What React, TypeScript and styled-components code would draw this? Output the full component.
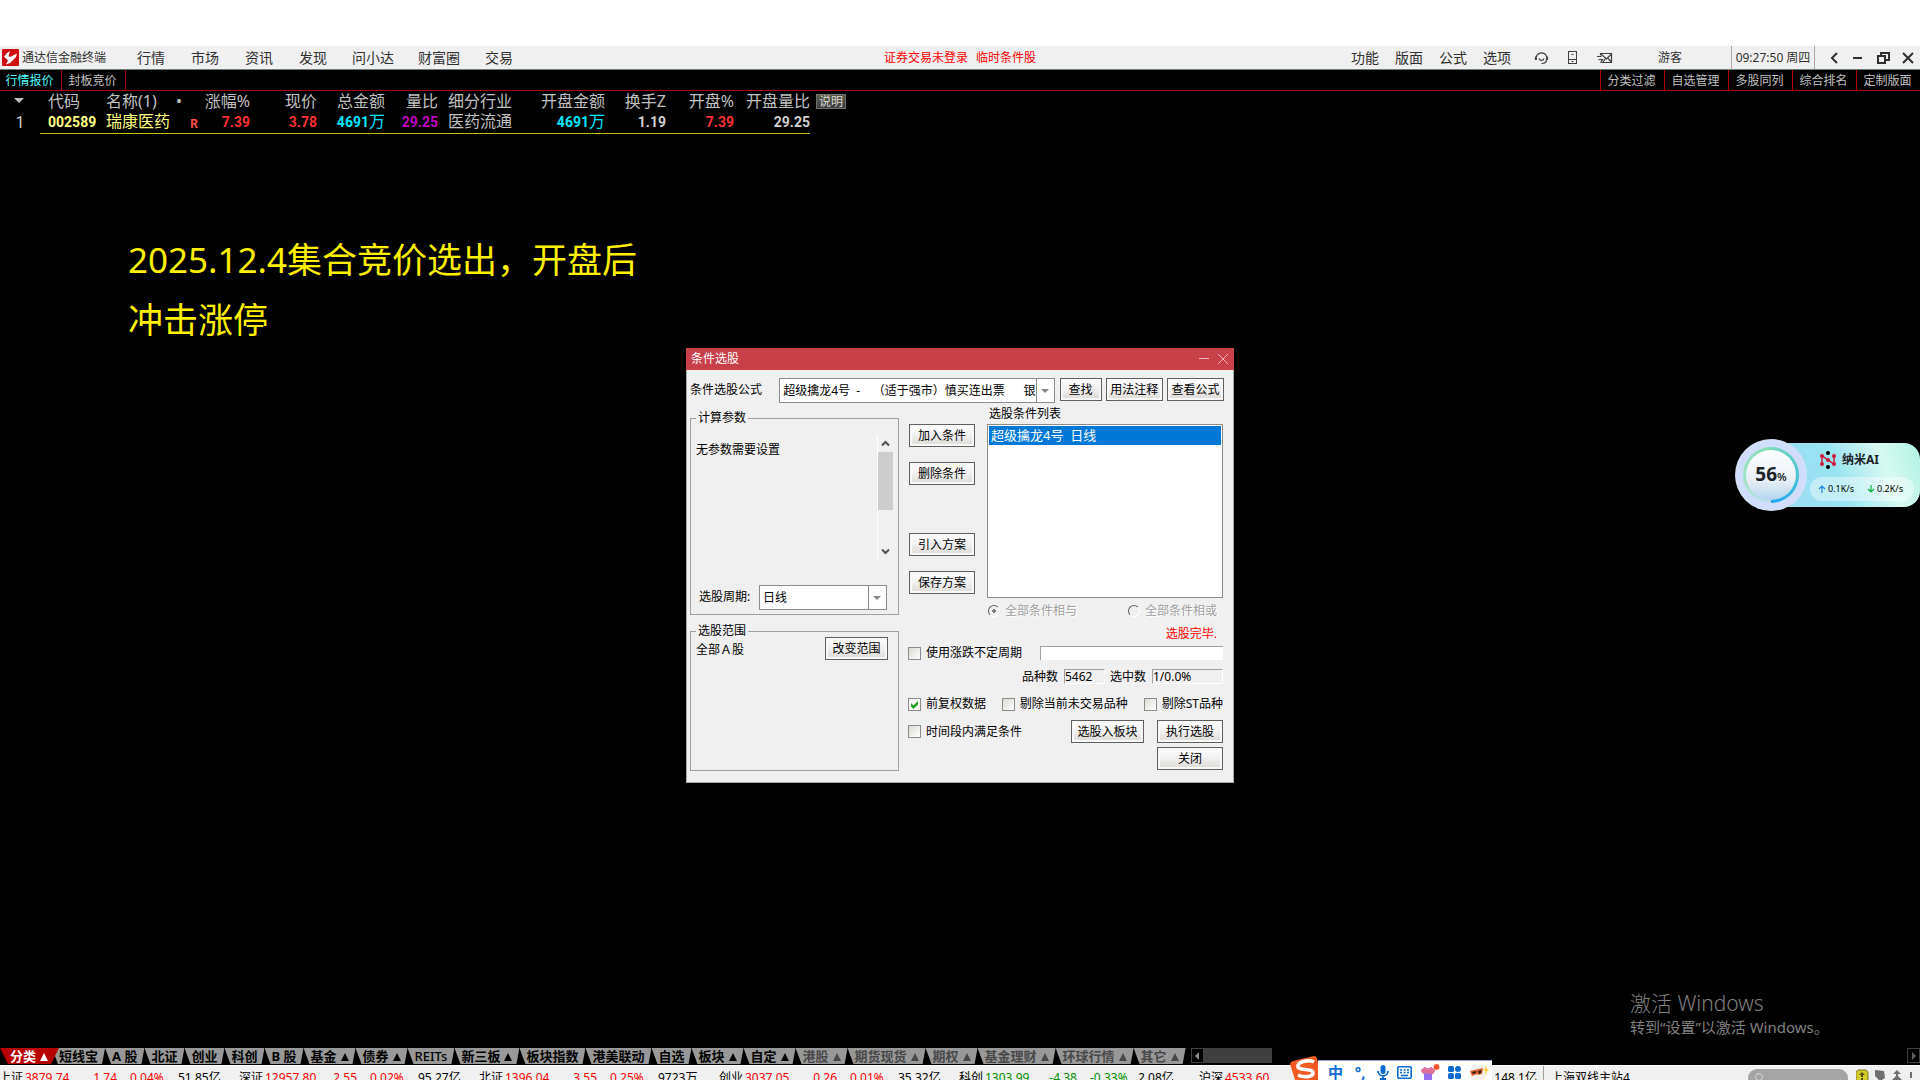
import React from "react";
import styled, { createGlobalStyle, css } from "styled-components";

const GlobalStyle = createGlobalStyle`
  *, *::before, *::after { box-sizing: border-box; }
  body {
    margin: 0;
    background: #000;
    font-family: "Noto Sans", "Noto Sans CJK SC", sans-serif;
    font-size: 12px;
    line-height: 16px;
  }
  button, input, select { font: inherit; color: inherit; margin: 0; }
`;

/* ---------- shell ---------- */

const Screen = styled.div`
  position: relative;
  display: flex;
  flex-direction: column;
  height: 100vh;
  overflow: hidden;
  background: #000;
`;

const TopStrip = styled.div`
  flex: none;
  height: 46px;
  background: #fff;
`;

const MenuBar = styled.header`
  flex: none;
  display: grid;
  grid-template-columns: 1fr auto 1fr;
  align-items: center;
  height: 24px;
  background: #f0f0f0;
  border-bottom: 1px solid #6c7c78;
  color: #303030;
`;

const Brand = styled.div`
  display: flex;
  align-items: center;
  gap: 3px;
  padding-left: 2px;
  width: 124px;
  white-space: nowrap;
`;

const MenuSide = styled.div<{ $end?: boolean }>`
  display: flex;
  align-items: center;
  justify-content: ${(p) => (p.$end ? "flex-end" : "flex-start")};
  height: 100%;
`;

const MenuButton = styled.button<{ $pad: number }>`
  border: 0;
  padding: 0 ${(p) => p.$pad}px;
  background: none;
  font-size: 14px;
  line-height: 20px;
  white-space: nowrap;
`;

const Notice = styled.div`
  display: flex;
  gap: 8px;
  color: #f00;
`;

const ToolIcons = styled.div`
  display: flex;
  align-items: center;
  gap: 19px;
  padding: 0 45px 0 15px;
`;

const IconButton = styled.button`
  display: flex;
  border: 0;
  padding: 0;
  background: none;
`;

const Guest = styled.span`
  padding-right: 49px;
`;

const Clock = styled.time`
  display: flex;
  align-items: center;
  justify-content: center;
  width: 84px;
  height: 100%;
  border: solid #a8a8a8;
  border-width: 0 1px;
  white-space: nowrap;
`;

const WindowIcons = styled.div`
  display: flex;
  gap: 12px;
  padding: 0 6px 0 14px;
`;

/* ---------- sub tabs ---------- */

const SubBar = styled.nav`
  flex: none;
  display: flex;
  justify-content: space-between;
  height: 21px;
  border-bottom: 1px solid #b00000;
`;

const SubGroup = styled.div`
  display: flex;
`;

const SubTab = styled.button<{ $active?: boolean; $edge: "left" | "right" }>`
  width: 64px;
  height: 20px;
  padding: 1px 2px 0 0;
  border: 0;
  border-${(p) => p.$edge}: 1px solid #b00000;
  background: none;
  color: ${(p) => (p.$active ? "#54fcfc" : "#c0c0c0")};
  white-space: nowrap;
  &:first-child { width: ${(p) => (p.$edge === "right" ? "62px" : "64px")}; }
`;

/* ---------- quotes ---------- */

const Main = styled.main`
  flex: 1;
  min-height: 0;
`;

const Quotes = styled.table`
  table-layout: fixed;
  width: 848px;
  border-collapse: collapse;
  color: #c0c0c0;
  font-size: 16px;
  line-height: 18px;
  svg { display: block; }
`;

const Th = styled.th<{ $left?: boolean }>`
  height: 20px;
  padding: 0;
  padding-left: ${(p) => (p.$left ? "8px" : "0")};
  text-align: ${(p) => (p.$left ? "left" : "right")};
  font-weight: 400;
  white-space: nowrap;
  &:last-of-type { padding-left: 6px; }
`;

const Td = styled.td<{ $left?: boolean; $color?: string; $plain?: boolean }>`
  height: 22px;
  padding: 1px 0 0;
  padding-left: ${(p) => (p.$left ? "8px" : "0")};
  text-align: ${(p) => (p.$left ? "left" : "right")};
  color: ${(p) => p.$color || "#d0d0d0"};
  font-family: Roboto, "Noto Sans CJK SC", sans-serif;
  font-size: 14px;
  font-weight: 700;
  white-space: nowrap;
  ${(p) =>
    !p.$plain &&
    css`
      border-bottom: 1px solid #c0c000;
    `}
`;

const Cjk = styled.span`
  font-size: 16px;
  font-weight: 400;
`;

const NameCell = styled.span`
  display: flex;
  justify-content: space-between;
  align-items: center;
  padding-right: 2px;
`;

const HeadDot = styled(NameCell)`
  padding-right: 18px;
`;

const Tag = styled.sup`
  align-self: flex-end;
  font-size: 12px;
  line-height: 14px;
  color: #ff5050;
`;

const Explain = styled.button`
  display: block;
  width: 30px;
  height: 15px;
  padding: 0;
  border: 1px solid #707070;
  background: linear-gradient(#5c5c44, #3c3c40);
  color: #d8d8d8;
  font-size: 12px;
  line-height: 13px;
`;

const Note = styled.p`
  margin: 96px 0 0 128px;
  color: #fff000;
  font-size: 35px;
  line-height: 60px;
  font-weight: 400;
`;

/* ---------- dialog ---------- */

const Dialog = styled.section`
  position: absolute;
  top: 348px;
  left: calc(50% - 274px);
  width: 548px;
  background: #f0f0f0;
  border: 1px solid #a8a8a8;
  color: #000;
  white-space: nowrap;
`;

const DialogTitle = styled.header`
  display: flex;
  align-items: center;
  justify-content: space-between;
  height: 22px;
  margin: -1px -1px 0;
  padding: 0 6px 0 5px;
  background: #c84048;
  color: #fff;
`;

const TitleIcons = styled.div`
  display: flex;
  gap: 9px;
`;

const DialogBody = styled.div`
  padding: 8px 10px 11px 3px;
`;

const FormulaRow = styled.div`
  display: flex;
  align-items: flex-start;
  justify-content: space-between;
  margin-right: -1px;
`;

const RowLabel = styled.label<{ $w: number }>`
  width: ${(p) => p.$w}px;
  line-height: 24px;
`;

const SelectBox = styled.span<{ $w: number }>`
  position: relative;
  display: block;
  width: ${(p) => p.$w}px;
  height: 25px;
  border: 1px solid #8c8c8c;
  background: #fff;
  select {
    display: block;
    width: 100%;
    height: 23px;
    padding: 0 18px 0 3px;
    border: 0;
    background: none;
    appearance: none;
    outline: none;
  }
  &::before {
    content: "";
    position: absolute;
    top: 0;
    bottom: 0;
    right: 17px;
    border-left: 1px solid #8c8c8c;
  }
  &::after {
    content: "";
    position: absolute;
    top: 10px;
    right: 5px;
    border: solid transparent;
    border-width: 4px 4px 0;
    border-top-color: #888;
  }
`;

const Button = styled.button<{ $w: number }>`
  width: ${(p) => p.$w}px;
  height: 23px;
  padding: 0;
  border: 1px solid #606060;
  box-shadow: inset 0 0 0 2px #f8f8f8;
  background: linear-gradient(#fff, #f0f0f0 50%, #dcdad4);
  line-height: 20px;
  white-space: nowrap;
`;

const Columns = styled.div`
  display: grid;
  grid-template-columns: 209px 1fr;
  column-gap: 10px;
  margin-top: 2px;
`;

const Left = styled.div`
  display: flex;
  flex-direction: column;
  gap: 8px;
  padding-top: 5px;
`;

const Group = styled.fieldset<{ $h: number }>`
  min-width: 0;
  height: ${(p) => p.$h}px;
  margin: 0;
  padding: 0 5px;
  border: 1px solid #a0a0a0;
  legend { padding: 0 2px; margin-left: 0; }
`;

const ParamArea = styled.div`
  display: flex;
  justify-content: space-between;
  height: 125px;
  margin-top: 9px;
  p { margin: 7px 0 0; }
`;

const ScrollTrack = styled.div`
  display: flex;
  flex-direction: column;
  align-items: center;
  width: 16px;
  border-left: 1px solid #fff;
`;

const ScrollThumb = styled.div`
  width: 15px;
  height: 58px;
  margin-bottom: auto;
  background: #cdcdcd;
`;

const ArrowBox = styled.span`
  display: flex;
  align-items: center;
  justify-content: center;
  width: 15px;
  height: 17px;
`;

const PeriodRow = styled.div`
  display: flex;
  margin-top: 25px;
  padding-left: 3px;
`;

const RangeRow = styled.div`
  display: flex;
  justify-content: space-between;
  align-items: flex-start;
  padding-right: 5px;
  margin-top: -2px;
  p { margin: 5px 0 0; }
`;

const Right = styled.div`
  display: flex;
  flex-direction: column;
`;

const ListArea = styled.div`
  display: grid;
  grid-template-columns: 66px 1fr;
  column-gap: 12px;
`;

const ButtonStack = styled.div`
  display: flex;
  flex-direction: column;
  gap: 15px;
  padding-top: 19px;
`;

const StackGap = styled.div`
  height: 18px;
`;

const ListHead = styled.div`
  padding: 0 2px 2px;
  line-height: 17px;
`;

const ListBox = styled.ul`
  height: 174px;
  margin: 0;
  padding: 1px;
  border: 1px solid #8c8c8c;
  background: #fff;
  list-style: none;
`;

const ListItem = styled.li`
  padding: 0 2px;
  background: #0078d7;
  color: #fff;
  font-size: 13px;
  line-height: 19px;
  white-space: pre;
`;

const RadioRow = styled.div`
  display: flex;
  justify-content: space-between;
  padding: 5px 6px 0 1px;
`;

const Choice = styled.label<{ $off?: boolean }>`
  display: flex;
  align-items: center;
  gap: 5px;
  color: ${(p) => (p.$off ? "#a0a0a0" : "#000")};
  text-shadow: ${(p) => (p.$off ? "1px 1px 0 #fff" : "none")};
  input[type="checkbox"] {
    width: 13px;
    height: 13px;
    appearance: none;
    border: 1px solid #8c8c8c;
    background: linear-gradient(135deg, #dcdcd4, #fff);
  }
  input[type="checkbox"]:checked {
    background: url("data:image/svg+xml,%3Csvg xmlns='http://www.w3.org/2000/svg' viewBox='0 0 11 11'%3E%3Cpath d='M2 4 4.5 6.5 9 2V5.500L4.5 10 2 7.500z' fill='%2321a121'/%3E%3C/svg%3E") #f8f8f4;
  }
  input[type="radio"] {
    width: 12px;
    height: 12px;
    appearance: none;
    border: 1px solid;
    border-color: #606060 #fff #fff #606060;
    border-radius: 50%;
    background: #f0f0f0;
  }
  input[type="radio"]:checked {
    background: radial-gradient(circle, #808080 0 2px, #f0f0f0 2px);
  }
`;

const Done = styled.p`
  margin: 7px 6px 0 0;
  color: #f00;
  text-align: right;
`;

const Line = styled.div<{ $top: number; $h: number; $end?: boolean }>`
  display: flex;
  align-items: center;
  justify-content: ${(p) => (p.$end ? "flex-end" : "space-between")};
  height: ${(p) => p.$h}px;
  margin-top: ${(p) => p.$top}px;
  margin-left: -1px;
`;

const Progress = styled.div`
  width: 183px;
  height: 14px;
  border: solid #a0a0a0;
  border-width: 1px 0 0 1px;
  background: #fff;
`;

const Readout = styled.output<{ $w: number }>`
  width: ${(p) => p.$w}px;
  height: 15px;
  margin: 0 5px 0 6px;
  border: 1px solid;
  border-color: #a0a0a0 #fff #fff #a0a0a0;
  line-height: 14px;
  &:last-child { margin-right: 0; }
`;

const Actions = styled.div`
  display: flex;
  gap: 13px;
`;

/* ---------- meter ---------- */

const Meter = styled.aside`
  position: absolute;
  top: 439px;
  right: 0;
  display: flex;
  align-items: center;
  color: #202428;
`;

const Dial = styled.div`
  position: relative;
  z-index: 1;
  display: grid;
  place-items: center;
  width: 72px;
  height: 72px;
  margin-right: -37px;
  border-radius: 50%;
  background: radial-gradient(circle, #cfdcfa 60%, #dfe8ff);
`;

const DialRing = styled.div`
  display: grid;
  place-items: center;
  width: 56px;
  height: 56px;
  border-radius: 50%;
  background: conic-gradient(#7fd8c0, #48c4d4 25%, #1ea8f4 50%, #c4dcf4 50%, #a4e4c8 70%, #84dcb4);
`;

const DialFace = styled.div`
  display: flex;
  align-items: baseline;
  justify-content: center;
  width: 50px;
  height: 50px;
  border-radius: 50%;
  background: linear-gradient(#fff, #e8f0f6 60%, #b4d4ec);
  font-size: 19px;
  line-height: 48px;
  font-weight: 700;
  small { font-size: 11px; font-weight: 600; }
`;

const MeterCard = styled.div`
  width: 150px;
  height: 64px;
  margin-top: -1px;
  padding: 8px 6px 6px 40px;
  border-radius: 0 16px 16px 0;
  background: linear-gradient(70deg, #a0d8f4, #98e4f0 45%, #d8f8f0 75%, #b0f4e4);
`;

const MeterName = styled.div`
  display: flex;
  align-items: center;
  gap: 6px;
  padding-left: 10px;
  font-weight: 700;
  line-height: 18px;
`;

const Rates = styled.div`
  display: flex;
  justify-content: space-between;
  align-items: center;
  height: 24px;
  margin-top: 8px;
  padding: 0 11px 0 8px;
  border-radius: 12px;
  background: rgba(255, 255, 255, 0.4);
  color: #000;
  font-size: 9px;
  span { display: flex; align-items: center; gap: 2px; }
`;

const Watermark = styled.aside`
  position: absolute;
  left: calc(100% - 290px);
  bottom: 42px;
  color: #808080;
  font-size: 15px;
  line-height: 22px;
  white-space: nowrap;
  strong { display: block; font-size: 21px; line-height: 26px; font-weight: 300; }
`;

/* ---------- footer ---------- */

const TabStrip = styled.nav`
  flex: none;
  display: flex;
  align-items: flex-start;
  height: 17px;
`;

const BottomTab = styled.button<{ $active?: boolean; $dim?: boolean; $light?: boolean }>`
  flex: none;
  height: 16px;
  padding: 0 7px;
  border: 0;
  background: #989898;
  color: ${(p) => (p.$dim ? "#484848" : "#000")};
  font-size: 13px;
  line-height: 16px;
  font-weight: ${(p) => (p.$light ? 500 : 700)};
  white-space: nowrap;
  clip-path: polygon(0 0, 100% 0, calc(100% - 3px) 100%, 6px 100%);
  ${(p) =>
    p.$active &&
    css`
      position: relative;
      z-index: 1;
      margin-right: -7px;
      padding: 0 11px 0 10px;
      background: #b80000;
      color: #fff;
      clip-path: polygon(0 0, 100% 0, calc(100% - 8px) 100%, 8px 100%);
    `}
`;

const UpMark = styled.span`
  display: inline-block;
  margin-left: 4px;
  border: solid transparent;
  border-width: 0 4px 8px;
  border-bottom-color: currentColor;
`;

const ScrollButton = styled.button<{ $last?: boolean }>`
  display: grid;
  place-items: center;
  width: 13px;
  height: 15px;
  margin-left: ${(p) => (p.$last ? "auto" : "5px")};
  padding: 0;
  border: 1px solid #404040;
  background: #000;
  color: #808080;
`;

const TabThumb = styled.div`
  width: 68px;
  height: 15px;
  background: #404040;
`;

const StatusBar = styled.footer`
  flex: none;
  display: flex;
  height: 15px;
  overflow: hidden;
  border-top: 1px solid #fff;
  background: #f0f0f0;
  color: #000;
  line-height: 24px;
  white-space: nowrap;
`;

const Index = styled.div<{ $color: string }>`
  flex: none;
  display: grid;
  grid-template-columns: 26px 44px 48px 61px 61px;
  width: 240px;
  margin-left: -1px;
  margin-right: 1px;
  span { color: ${(p) => p.$color}; }
  span:nth-child(3) { text-align: right; }
  span:nth-child(4) { padding-left: 13px; }
  span:first-child, span:last-child { color: #000; }
`;

const Turnover = styled.span`
  width: 104px;
  padding-right: 6px;
  border-right: 1px solid #a0a0a0;
  text-align: right;
`;

const Host = styled.span`
  padding-left: 7px;
`;

const StatusEnd = styled.div`
  display: flex;
  gap: 8px;
  align-items: flex-start;
  margin-left: auto;
  padding: 3px 6px 0 0;
`;

const SearchPill = styled.label`
  display: flex;
  width: 100px;
  height: 18px;
  padding: 4px 6px;
  border-radius: 9px;
  background: #a4a4a4;
  input { width: 70px; height: 10px; border: 0; padding: 0; background: none; }
`;

const Ime = styled.div`
  position: absolute;
  left: calc(100% - 630px);
  bottom: 0;
  display: flex;
  align-items: flex-end;
`;

const ImeBar = styled.div`
  display: flex;
  align-items: center;
  justify-content: space-between;
  width: 174px;
  height: 20px;
  margin-left: -3px;
  padding: 3px 2px 0 10px;
  border-top: 1px solid #90a8d8;
  background: #fff;
  color: #0a6cd0;
  font-size: 15px;
  font-weight: 700;
  line-height: 16px;
`;

const ImePunct = styled.span`
  width: 18px;
  text-align: center;
`;

/* ---------- drawings ---------- */

const BrandMark = () => (
  <svg width="17" height="17" viewBox="0 0 17 17">
    <rect width="17" height="17" rx="1" fill="#d01010" />
    <path d="M2 7.500 5.500 3.500 8 2 6.500 7l1.500 1 7-3.500L14 8l-6 6-4 1.500 2-4z" fill="#fff" />
  </svg>
);

const Headset = () => (
  <svg width="15" height="14" viewBox="0 0 15 14" fill="none" stroke="#404040" strokeWidth="1.2">
    <path d="M2.500 8.500A5.300 5 0 1 1 12.500 8.500M1.500 5.500v3h1.500M13.500 5.500v3H12M12.500 8.500c0 3-2 4-5 4M5 7.500c1 2.500 4 2.500 5 0" />
  </svg>
);

const Phone = () => (
  <svg width="10" height="13" viewBox="0 0 10 13" fill="none" stroke="#404040">
    <rect x=".5" y=".5" width="8" height="12" />
    <path d="M0 8.500h9M3.500 10.500h2M3.500 3.500h2" />
  </svg>
);

const Mail = () => (
  <svg width="16" height="12" viewBox="0 0 16 12" fill="none" stroke="#404040" strokeWidth="1.200">
    <path d="M3.500 3.500v-2h11v9H4.500M4 2l5.500 5L14.500 2M0 4.500h4.500M1.500 7.500h4l-2 3M6 10l2.500-3.500M14.500 10 11 6.500" />
  </svg>
);

const Chevron = ({ up }: { up?: boolean }) => (
  <svg width="9" height="7" viewBox="0 0 9 7" fill="none" stroke="#505050" strokeWidth="2">
    <path d={up ? "M1 5.500 4.500 2 8 5.500" : "M1 1.500 4.500 5 8 1.500"} />
  </svg>
);

const NanoMark = () => (
  <svg width="16" height="18" viewBox="0 0 16 18">
    <path d="M2 13V5l12 8V5" fill="none" stroke="#d01c38" strokeWidth="1.500" />
    <g fill="#d01c38">
      <circle cx="2" cy="5" r="2" />
      <circle cx="2" cy="13" r="2" />
      <circle cx="14" cy="5" r="2" />
      <circle cx="14" cy="13" r="2" />
      <circle cx="8" cy="9" r="2" />
    </g>
    <circle cx="8" cy="2" r="2" />
    <circle cx="8" cy="16" r="2" />
  </svg>
);

const RateArrow = ({ down }: { down?: boolean }) => (
  <svg width="8" height="8" viewBox="0 0 8 8" fill="none" stroke={down ? "#10b040" : "#1c88f0"} strokeWidth="1.200">
    <path d={down ? "M4 0v7M1 4l3 3 3-3" : "M4 8V1M1 4l3-3 3 3"} />
  </svg>
);

const SogouMark = () => (
  <svg width="31" height="24" viewBox="0 0 31 24">
    <path d="M3 5 24 0q2 0 3 2l4 22H5L0 8q0-2 3-3z" fill="#f45a24" />
    <path d="M24 6C18 3 7 6 8 11c1 4 15 1 15 6 0 4-9 5-15 2" fill="none" stroke="#fff" strokeWidth="3.600" />
  </svg>
);

const Mic = () => (
  <svg width="12" height="16" viewBox="0 0 12 16" fill="none" stroke="#0a6cd0" strokeWidth="1.800">
    <rect x="3.500" y="1" width="5" height="9" rx="2.500" fill="#0a6cd0" stroke="none" />
    <path d="M1 7c0 6.500 10 6.500 10 0M6 12v3M3 15h6" />
  </svg>
);

const Keyboard = () => (
  <svg width="15" height="13" viewBox="0 0 15 13" fill="none" stroke="#0a6cd0" strokeWidth="1.600">
    <rect x=".8" y=".8" width="13.400" height="11.400" rx="1" />
    <path d="M3 4h9M3 6.500h9" strokeDasharray="2 1.500" />
    <path d="M4 9.500h7" />
  </svg>
);

const Shirt = () => (
  <svg width="19" height="17" viewBox="0 0 19 17">
    <path d="m0 6 4-3q3 3 6 0l4 3-2 4-1-1v8H3V9L2 10z" fill="#9a6cf0" />
    <path d="m0 6 4-3q3 3 6 0l4 3-2 4-9-1-1 1z" fill="#e07098" />
    <circle cx="15.500" cy="3" r="3" fill="#ff5a30" />
  </svg>
);

const GridMark = () => (
  <svg width="13" height="13" viewBox="0 0 13 13" fill="#0a6cd0">
    <rect width="6" height="6" rx="1.500" />
    <circle cx="10" cy="3" r="3" />
    <rect y="7" width="6" height="6" rx="1.500" />
    <rect x="7" y="7" width="6" height="6" rx="1.500" />
  </svg>
);

const Puppy = () => (
  <svg width="21" height="18" viewBox="0 0 21 18">
    <path d="M2 6 5 1l4 2 5-2 3 5v9l-4 3H5l-4-4z" fill="#f4f0ea" />
    <path d="m1 8 13-3-1 6-4 1-1-1-5 2z" fill="#e0602c" />
    <path d="m3 9 4-1v2l-3 1zM9 8l4-1-1 3-2 1z" fill="#302018" />
    <path d="m17 2 1 4 3 1-3 1-1 5-1-5-2-1 2-1z" fill="#ffd040" />
  </svg>
);

const TrayIcons = () => (
  <svg width="58" height="14" viewBox="0 0 58 14">
    <path d="M2 1h8l2 2v11H0V3z" fill="#d4cc28" stroke="#787820" />
    <path d="m6 3 3 3H7v2H5V6H3zM5 9h2v2H5z" fill="#505010" />
    <path d="m19 1 9 1 1 7-5 3-5-5z" fill="#707070" />
    <path d="M23 8v5h6" fill="none" stroke="#707070" />
    <path d="m41 1 4 4h-3v2l4 4h-4v3h-2v-3h-4l4-4V5h-3zM54 3h2v6h-2zM54 11h2v3h-2z" fill="#707070" />
  </svg>
);

/* ---------- data ---------- */

const menus = ["行情", "市场", "资讯", "发现", "问小达", "财富圈", "交易"];
const tools = ["功能", "版面", "公式", "选项"];
const filters = ["分类过滤", "自选管理", "多股同列", "综合排名", "定制版面"];
const colWidths = [40, 58, 102, 50, 67, 68, 53, 74, 93, 61, 68, 76, 38];
const heads = ["涨幅%", "现价", "总金额", "量比", "细分行业", "开盘金额", "换手Z", "开盘%"];

const tabs: { text: string; up?: boolean; dim?: boolean }[] = [
  { text: "分类", up: true },
  { text: "短线宝" },
  { text: "A 股" },
  { text: "北证" },
  { text: "创业" },
  { text: "科创" },
  { text: "B 股" },
  { text: "基金", up: true },
  { text: "债券", up: true },
  { text: "REITs" },
  { text: "新三板", up: true },
  { text: "板块指数" },
  { text: "港美联动" },
  { text: "自选" },
  { text: "板块", up: true },
  { text: "自定", up: true },
  { text: "港股", up: true, dim: true },
  { text: "期货现货", up: true, dim: true },
  { text: "期权", up: true, dim: true },
  { text: "基金理财", up: true, dim: true },
  { text: "环球行情", up: true, dim: true },
  { text: "其它", up: true, dim: true },
];

const indices = [
  ["上证", "3879.74", "1.74", "0.04%", "51.85亿"],
  ["深证", "12957.80", "2.55", "0.02%", "95.27亿"],
  ["北证", "1396.04", "3.55", "0.25%", "9723万"],
  ["创业", "3037.05", "0.26", "0.01%", "35.32亿"],
  ["科创", "1303.99", "-4.38", "-0.33%", "2.08亿"],
  ["沪深", "4533.60", "", "", ""],
];

/* ---------- views ---------- */

const Check = ({ text, on }: { text: string; on?: boolean }) => (
  <Choice>
    <input type="checkbox" defaultChecked={on} />
    {text}
  </Choice>
);

const ScreenerDialog = () => (
  <Dialog role="dialog" aria-labelledby="screener-title">
    <DialogTitle>
      <span id="screener-title">条件选股</span>
      <TitleIcons>
        <IconButton aria-label="最小化">
          <svg width="10" height="10" stroke="#f0b0b4"><path d="M0 4.500h10" /></svg>
        </IconButton>
        <IconButton aria-label="关闭窗口">
          <svg width="10" height="10" stroke="#f0b0b4"><path d="m0 0 10 10M10 0 0 10" /></svg>
        </IconButton>
      </TitleIcons>
    </DialogTitle>
    <DialogBody>
      <FormulaRow>
        <RowLabel $w={85} htmlFor="formula">条件选股公式</RowLabel>
        <SelectBox $w={276}>
          <select id="formula">
            <option>{"超级擒龙4号\u00a0\u00a0-\u00a0\u00a0\u00a0\u00a0（适于强市）慎买连出票\u00a0\u00a0\u00a0\u00a0\u00a0\u00a0银"}</option>
          </select>
        </SelectBox>
        <Button $w={42}>查找</Button>
        <Button $w={57}>用法注释</Button>
        <Button $w={57}>查看公式</Button>
      </FormulaRow>
      <Columns>
        <Left>
          <Group $h={205}>
            <legend>计算参数</legend>
            <ParamArea>
              <p>无参数需要设置</p>
              <ScrollTrack>
                <ArrowBox><Chevron up /></ArrowBox>
                <ScrollThumb />
                <ArrowBox><Chevron /></ArrowBox>
              </ScrollTrack>
            </ParamArea>
            <PeriodRow>
              <RowLabel $w={60} htmlFor="period">选股周期:</RowLabel>
              <SelectBox $w={128}>
                <select id="period">
                  <option>日线</option>
                </select>
              </SelectBox>
            </PeriodRow>
          </Group>
          <Group $h={148}>
            <legend>选股范围</legend>
            <RangeRow>
              <p>全部Ａ股</p>
              <Button $w={63}>改变范围</Button>
            </RangeRow>
          </Group>
        </Left>
        <Right>
          <ListArea>
            <ButtonStack>
              <Button $w={66}>加入条件</Button>
              <Button $w={66}>删除条件</Button>
              <StackGap />
              <Button $w={66}>引入方案</Button>
              <Button $w={66}>保存方案</Button>
            </ButtonStack>
            <div>
              <ListHead>选股条件列表</ListHead>
              <ListBox>
                <ListItem>超级擒龙4号{"  "}日线</ListItem>
              </ListBox>
              <RadioRow>
                <Choice $off>
                  <input type="radio" name="combine" defaultChecked disabled />
                  全部条件相与
                </Choice>
                <Choice $off>
                  <input type="radio" name="combine" disabled />
                  全部条件相或
                </Choice>
              </RadioRow>
            </div>
          </ListArea>
          <Done>选股完毕.</Done>
          <Line $top={4} $h={14}>
            <Check text="使用涨跌不定周期" />
            <Progress />
          </Line>
          <Line $top={9} $h={15} $end>
            <span>品种数</span>
            <Readout $w={41}>5462</Readout>
            <span>选中数</span>
            <Readout $w={71}>1/0.0%</Readout>
          </Line>
          <Line $top={12} $h={16}>
            <Check text="前复权数据" on />
            <Check text="剔除当前未交易品种" />
            <Check text="剔除ST品种" />
          </Line>
          <Line $top={8} $h={23}>
            <Check text="时间段内满足条件" />
            <Actions>
              <Button $w={73}>选股入板块</Button>
              <Button $w={66}>执行选股</Button>
            </Actions>
          </Line>
          <Line $top={4} $h={23} $end>
            <Button $w={66}>关闭</Button>
          </Line>
        </Right>
      </Columns>
    </DialogBody>
  </Dialog>
);

export default function App() {
  return (
    <Screen lang="zh-CN">
      <GlobalStyle />
      <TopStrip />
      <MenuBar>
        <MenuSide>
          <Brand>
            <BrandMark />
            通达信金融终端
          </Brand>
          {menus.map((m) => (
            <MenuButton key={m} $pad={m.length > 2 ? 12 : 13}>{m}</MenuButton>
          ))}
        </MenuSide>
        <Notice>
          <span>证券交易未登录</span>
          <span>临时条件股</span>
        </Notice>
        <MenuSide $end>
          {tools.map((m) => (
            <MenuButton key={m} $pad={8}>{m}</MenuButton>
          ))}
          <ToolIcons>
            <IconButton aria-label="客服"><Headset /></IconButton>
            <IconButton aria-label="手机"><Phone /></IconButton>
            <IconButton aria-label="邮件"><Mail /></IconButton>
          </ToolIcons>
          <Guest>游客</Guest>
          <Clock>09:27:50 周四</Clock>
          <WindowIcons>
            <IconButton aria-label="返回">
              <svg width="12" height="12" fill="none" stroke="#303030" strokeWidth="2"><path d="M8 1 3 6l5 5" /></svg>
            </IconButton>
            <IconButton aria-label="最小化">
              <svg width="12" height="12" stroke="#303030" strokeWidth="2"><path d="M0 6h9" /></svg>
            </IconButton>
            <IconButton aria-label="还原">
              <svg width="13" height="12" fill="none" stroke="#303030" strokeWidth="2"><path d="M1 4h7v7H1zM4 4V1h8v7H8" /></svg>
            </IconButton>
            <IconButton aria-label="关闭">
              <svg width="12" height="12" stroke="#303030" strokeWidth="2"><path d="m1 1 10 10M11 1 1 11" /></svg>
            </IconButton>
          </WindowIcons>
        </MenuSide>
      </MenuBar>
      <SubBar>
        <SubGroup>
          <SubTab $active $edge="right">行情报价</SubTab>
          <SubTab $edge="right">封板竞价</SubTab>
        </SubGroup>
        <SubGroup>
          {filters.map((f) => (
            <SubTab key={f} $edge="left">{f}</SubTab>
          ))}
        </SubGroup>
      </SubBar>
      <Main>
        <Quotes>
          <colgroup>
            {colWidths.map((w, i) => (
              <col key={i} width={w} />
            ))}
          </colgroup>
          <thead>
            <tr>
              <Th>
                <svg width="40" height="12" viewBox="0 0 40 12"><path d="M14 3h10l-5 5z" fill="#c0c0c0" /></svg>
              </Th>
              <Th $left>代码</Th>
              <Th $left><HeadDot>名称(1)<span>•</span></HeadDot></Th>
              {heads.map((h) => (
                <Th key={h}>{h}</Th>
              ))}
              <Th>开盘量比</Th>
              <Th><Explain>说明</Explain></Th>
            </tr>
          </thead>
          <tbody>
            <tr>
              <Td $plain style={{ textAlign: "center" }}><Cjk>1</Cjk></Td>
              <Td $left $color="#ffff80">002589</Td>
              <Td $left $color="#ffff80">
                <NameCell><Cjk>瑞康医药</Cjk><Tag>R</Tag></NameCell>
              </Td>
              <Td $color="#ff3232">7.39</Td>
              <Td $color="#ff3232">3.78</Td>
              <Td $color="#00e6ff">4691<Cjk>万</Cjk></Td>
              <Td $color="#c000c0">29.25</Td>
              <Td $color="#c0c0c0"><Cjk>医药流通</Cjk></Td>
              <Td $color="#00e6ff">4691<Cjk>万</Cjk></Td>
              <Td>1.19</Td>
              <Td $color="#ff3232">7.39</Td>
              <Td>29.25</Td>
            </tr>
          </tbody>
        </Quotes>
        <Note>
          2025.12.4集合竞价选出，开盘后
          <br />
          冲击涨停
        </Note>
      </Main>
      <TabStrip>
        {tabs.map((t, i) => (
          <BottomTab key={t.text} $active={i === 0} $dim={t.dim} $light={t.text === "REITs"}>
            {t.text}
            {t.up && <UpMark />}
          </BottomTab>
        ))}
        <ScrollButton aria-label="向左">
          <svg width="6" height="8"><path d="M5 0v8L1 4z" fill="#909090" /></svg>
        </ScrollButton>
        <TabThumb />
        <ScrollButton $last aria-label="向右">
          <svg width="6" height="8"><path d="M1 0v8l4-4z" fill="#606060" /></svg>
        </ScrollButton>
      </TabStrip>
      <StatusBar>
        {indices.map((row) => (
          <Index key={row[0]} $color={row[2].startsWith("-") ? "#009000" : "#f00"}>
            {row.map((v, i) => (
              <span key={i}>{v}</span>
            ))}
          </Index>
        ))}
        <Turnover>148.1亿</Turnover>
        <Host>上海双线主站4</Host>
        <StatusEnd>
          <SearchPill>
            <svg width="12" height="12" fill="none" stroke="#d8d8d8"><circle cx="5" cy="4" r="3.500" /><path d="m7 7 4 4" /></svg>
            <input aria-label="搜索" />
          </SearchPill>
          <TrayIcons />
        </StatusEnd>
      </StatusBar>
      <ScreenerDialog />
      <Meter>
        <Dial>
          <DialRing>
            <DialFace>56<small>%</small></DialFace>
          </DialRing>
        </Dial>
        <MeterCard>
          <MeterName><NanoMark />纳米AI</MeterName>
          <Rates>
            <span><RateArrow />0.1K/s</span>
            <span><RateArrow down />0.2K/s</span>
          </Rates>
        </MeterCard>
      </Meter>
      <Watermark>
        <strong>激活 Windows</strong>
        转到“设置”以激活 Windows。
      </Watermark>
      <Ime>
        <SogouMark />
        <ImeBar>
          <span>中</span>
          <ImePunct>°,</ImePunct>
          <Mic />
          <Keyboard />
          <Shirt />
          <GridMark />
          <Puppy />
        </ImeBar>
      </Ime>
    </Screen>
  );
}
